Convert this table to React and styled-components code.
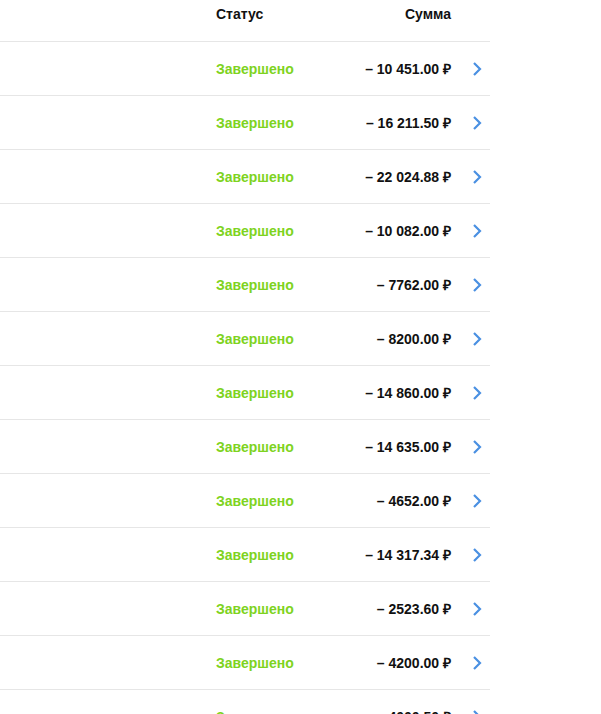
import React from "react";
import styled, { createGlobalStyle } from "styled-components";

const Global = createGlobalStyle`
  html, body { margin: 0; padding: 0; background: #fff; }
  body { font-family: "Liberation Sans", Arial, sans-serif; }
`;

const Table = styled.div`
  width: 490px;
  display: flex;
  flex-direction: column;
`;

const Row = styled.div`
  display: grid;
  grid-template-columns: 216px 1fr auto 39px;
  align-items: ${(p) => (p.$head ? "start" : "center")};
  height: ${(p) => (p.$head ? "41px" : "53px")};
  box-sizing: content-box;
  border-bottom: 1px solid #e6e6e6;
`;

const Cell = styled.div`
  font-size: 14px;
  font-weight: 700;
  line-height: 16px;
  color: ${(p) => p.$color || "#111"};
  text-align: ${(p) => p.$align || "left"};
  padding-top: ${(p) => (p.$head ? "6px" : "0")};
  white-space: nowrap;
`;

const Arrow = styled.div`
  display: flex;
  align-items: center;
  padding-left: 20px;
  color: #4a90e2;
`;

const Chevron = () => (
  <svg width="12" height="16" viewBox="0 0 12 16">
    <path d="M3 2 L9 8 L3 14" fill="none" stroke="currentColor" strokeWidth="2.2" />
  </svg>
);

const amounts = [
  "– 10 451.00 ₽",
  "– 16 211.50 ₽",
  "– 22 024.88 ₽",
  "– 10 082.00 ₽",
  "– 7762.00 ₽",
  "– 8200.00 ₽",
  "– 14 860.00 ₽",
  "– 14 635.00 ₽",
  "– 4652.00 ₽",
  "– 14 317.34 ₽",
  "– 2523.60 ₽",
  "– 4200.00 ₽",
  "– 4000.50 ₽",
  "– 3100.00 ₽",
];

export default function App() {
  return (
    <>
      <Global />
      <Table>
        <Row $head>
          <div />
          <Cell $head>Статус</Cell>
          <Cell $head $align="right">Сумма</Cell>
          <div />
        </Row>
        {amounts.map((a, i) => (
          <Row key={i}>
            <div />
            <Cell $color="#7ed321">Завершено</Cell>
            <Cell $align="right">{a}</Cell>
            <Arrow>
              <Chevron />
            </Arrow>
          </Row>
        ))}
      </Table>
    </>
  );
}
